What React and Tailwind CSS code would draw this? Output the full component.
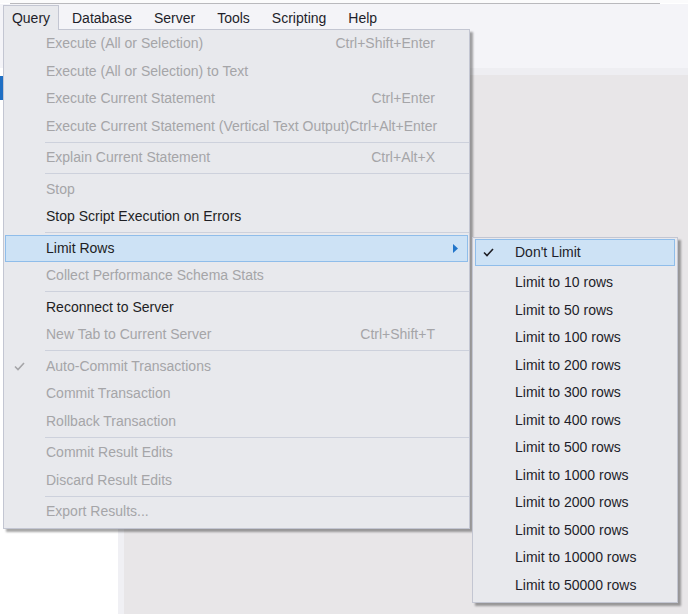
import React from "react";

const mainItems = [
  { label: "Execute (All or Selection)", shortcut: "Ctrl+Shift+Enter", disabled: true },
  { label: "Execute (All or Selection) to Text", disabled: true },
  { label: "Execute Current Statement", shortcut: "Ctrl+Enter", disabled: true },
  { label: "Execute Current Statement (Vertical Text Output)", shortcut: "Ctrl+Alt+Enter", disabled: true },
  { sep: true },
  { label: "Explain Current Statement", shortcut: "Ctrl+Alt+X", disabled: true },
  { sep: true },
  { label: "Stop", disabled: true },
  { label: "Stop Script Execution on Errors" },
  { sep: true },
  { label: "Limit Rows", submenu: true, active: true },
  { label: "Collect Performance Schema Stats", disabled: true },
  { sep: true },
  { label: "Reconnect to Server" },
  { label: "New Tab to Current Server", shortcut: "Ctrl+Shift+T", disabled: true },
  { sep: true },
  { label: "Auto-Commit Transactions", disabled: true, checked: true },
  { label: "Commit Transaction", disabled: true },
  { label: "Rollback Transaction", disabled: true },
  { sep: true },
  { label: "Commit Result Edits", disabled: true },
  { label: "Discard Result Edits", disabled: true },
  { sep: true },
  { label: "Export Results...", disabled: true },
];

const limits = ["10", "50", "100", "200", "300", "400", "500", "1000", "2000", "5000", "10000", "50000"];

function Check({ color }) {
  return (
    <svg width="11" height="9" viewBox="0 0 11 9" fill="none">
      <path d="M1 4.5 L4 7.5 L10 1" stroke={color} strokeWidth="1.6" />
    </svg>
  );
}

function MenuRow({ item }) {
  if (item.sep) {
    return (
      <div className="h-[4px] flex items-center pl-[41px]">
        <div className="h-px w-full bg-[#cdd1dc]"></div>
      </div>
    );
  }
  const text = item.disabled ? "text-[#a5a5a8]" : "text-[#1e1e24]";
  return (
    <div
      className={`relative h-[27.5px] flex items-center ${text} ${
        item.active ? "mx-[1px] bg-[#cde2f5] border border-[#8fbdea]" : "mx-[1px] border border-transparent"
      }`}
    >
      <div className="w-[26px] shrink-0 flex justify-center">
        {item.checked && <Check color="#a5a5a8" />}
      </div>
      <div className="w-[14px] shrink-0"></div>
      <span className="shrink-0 whitespace-nowrap">{item.label}</span>
      <div className="flex-1"></div>
      {item.shortcut && <span className="shrink-0 whitespace-nowrap pr-[32px]">{item.shortcut}</span>}
      {item.submenu && (
        <svg className="mr-[9px]" width="5" height="9" viewBox="0 0 5 9">
          <path d="M0 0 L5 4.5 L0 9 Z" fill="#2275c9" />
        </svg>
      )}
    </div>
  );
}

export default function App() {
  const menus = ["Database", "Server", "Tools", "Scripting", "Help"];
  return (
    <div className="relative w-[688px] h-[614px] overflow-hidden bg-white font-['Liberation_Sans',Arial,sans-serif] text-[14px]">
      {/* background window */}
      <div className="flex flex-col h-full">
        <div className="h-[3px] bg-[#fbfbfc]"></div>
        <div className="h-px bg-[#b9b9bd] mx-[10px] mr-[28px]"></div>
        <div className="h-[64px] bg-[#f4f4f8] flex items-start pt-[2px]">
          <div className="flex items-center h-[24px] text-[#1e1e2a]">
            <div className="ml-[3px] w-[56px] h-[26px] border border-b-0 border-[#c3c6d2] bg-[#e8e9ed] flex items-center justify-center">
              Query
            </div>
            <div className="flex gap-[22px] ml-[13px]">
              {menus.map((m) => (
                <span key={m}>{m}</span>
              ))}
            </div>
          </div>
        </div>
        <div className="flex-1 flex">
          <div className="w-[118px] bg-white flex flex-col">
            <div className="h-[8px]"></div>
            <div className="w-[3px] h-[24px] bg-[#1f6fc4]"></div>
          </div>
          <div className="w-[6px] bg-[#f0f0f4]"></div>
          <div className="flex-1 flex flex-col">
            <div className="h-[7px] bg-[#eeeef2]"></div>
            <div className="flex-1 bg-[#e8e6e8]"></div>
          </div>
        </div>
      </div>

      {/* Query dropdown */}
      <div className="absolute left-[3px] top-[29px] w-[467px] border border-[#c3c6d2] bg-[#e8e9ed] pb-[2px] shadow-[3px_3px_2px_rgba(0,0,0,0.35)]">
        {mainItems.map((item, i) => (
          <MenuRow key={i} item={item} />
        ))}
      </div>
      {/* open the dropdown top border under the Query tab */}
      <div className="absolute left-[4px] top-[29px] w-[54px] h-px bg-[#e8e9ed]"></div>

      {/* Limit Rows submenu */}
      <div className="absolute left-[472px] top-[237px] w-[206px] border border-[#c3c6d2] bg-[#e8e9ed] pt-[1px] pb-[3px] shadow-[3px_3px_2px_rgba(0,0,0,0.35)] text-[#1e1e2a]">
        <div className="mx-[2px] h-[27px] flex items-center bg-[#cde2f5] border border-[#8fbdea]">
          <div className="w-[24px] flex justify-center">
            <Check color="#1e1e24" />
          </div>
          <span className="ml-[15px]">Don't Limit</span>
        </div>
        <div className="h-[3px]"></div>
        {limits.map((n) => (
          <div key={n} className="h-[27.5px] flex items-center pl-[42px]">
            Limit to {n} rows
          </div>
        ))}
      </div>
    </div>
  );
}
